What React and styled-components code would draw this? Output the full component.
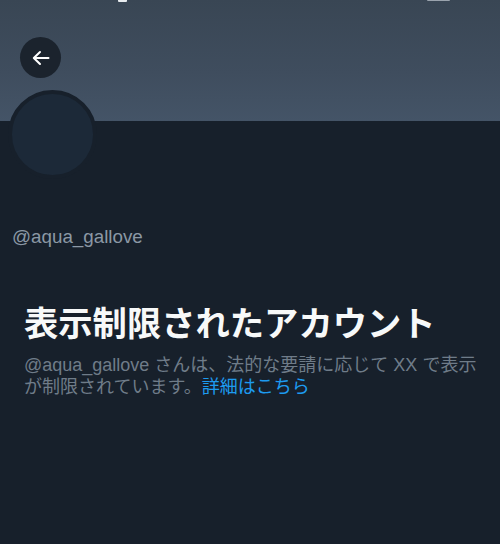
import React from "react";
import styled, { createGlobalStyle } from "styled-components";

const Global = createGlobalStyle`
  html, body { margin: 0; padding: 0; background: #17202b; }
  body { font-family: "Liberation Sans", "Noto Sans CJK JP", sans-serif; }
`;

const Page = styled.div`
  width: 500px;
  height: 544px;
  background: #17202b;
  overflow: hidden;
`;

const Header = styled.div`
  position: relative;
  height: 121px;
  background: linear-gradient(180deg, #394654 0%, #3f4d5e 60%, #445467 100%);
  padding: 37px 0 0 20px;
  box-sizing: border-box;
`;

const StatusMark = styled.span`
  position: absolute;
  top: 0;
  left: ${(p) => p.$left}px;
  width: ${(p) => p.$w}px;
  height: ${(p) => p.$h}px;
  background: ${(p) => p.$color};
  border-radius: 0 0 1px 1px;
`;

const BackButton = styled.button`
  width: 41px;
  height: 41px;
  border-radius: 50%;
  border: none;
  padding: 0;
  background: #1b232d;
  display: flex;
  align-items: center;
  justify-content: center;
  cursor: pointer;
`;

const Avatar = styled.div`
  width: 81px;
  height: 81px;
  margin: -31px 0 0 8px;
  border: 4px solid #17202b;
  border-radius: 50%;
  background: #1c2938;
  position: relative;
`;

const Handle = styled.div`
  margin: 47px 0 0 12px;
  font-size: 18.8px;
  line-height: 22px;
  color: #8b98a5;
`;

const Body = styled.div`
  padding: 53px 24px 0 24px;
`;

const Title = styled.h1`
  margin: 0;
  font-family: "Noto Sans CJK JP", sans-serif;
  font-weight: 700;
  font-size: 34.3px;
  line-height: 40px;
  color: #f7f9f9;
  white-space: nowrap;
`;

const Text = styled.p`
  margin: 13px 0 0 0;
  font-size: 18px;
  line-height: 22px;
  color: #6f7c89;
  white-space: nowrap;
`;

const Link = styled.a`
  color: #1d9bf0;
  text-decoration: none;
`;

const ArrowLeft = () => (
  <svg width="20" height="20" viewBox="0 0 20 20" fill="none">
    <path d="M17.5 10H3.2M9 4L2.8 10L9 16" stroke="#ffffff" strokeWidth="2" strokeLinecap="round" strokeLinejoin="round" />
  </svg>
);

export default function App() {
  return (
    <Page>
      <Global />
      <Header>
        <StatusMark $left={118} $w={9} $h={2} $color="#e8ecef" />
        <StatusMark $left={427} $w={23} $h={1} $color="#9aa3ad" />
        <BackButton aria-label="戻る">
          <ArrowLeft />
        </BackButton>
      </Header>
      <Avatar />
      <Handle>@aqua_gallove</Handle>
      <Body>
        <Title>表示制限されたアカウント</Title>
        <Text>
          @aqua_gallove さんは、法的な要請に応じて XX で表示
          <br />
          が制限されています。<Link href="#">詳細はこちら</Link>
        </Text>
      </Body>
    </Page>
  );
}
